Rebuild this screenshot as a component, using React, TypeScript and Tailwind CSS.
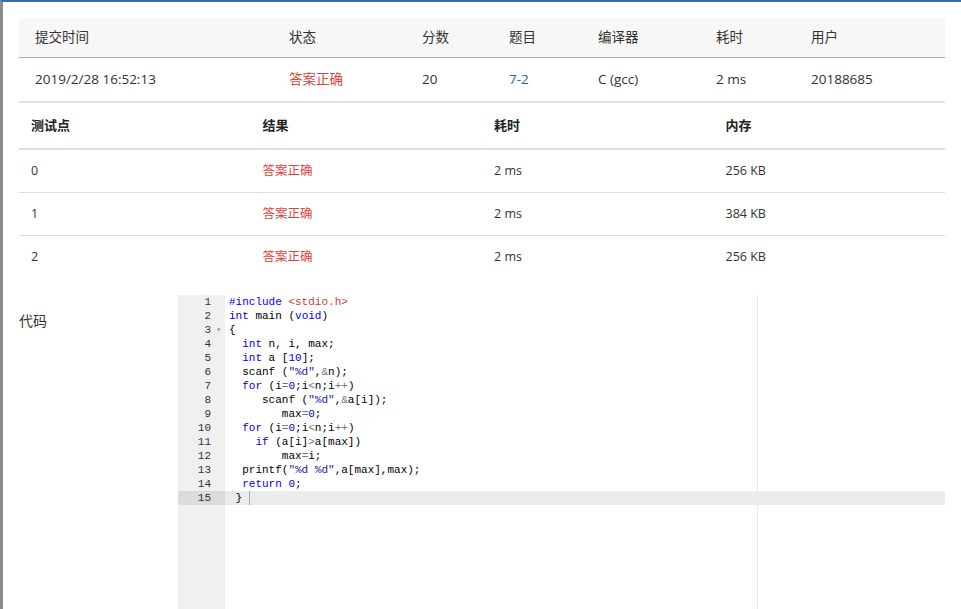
import React from "react";

const sans = { fontFamily: '"Open Sans", "Noto Sans CJK SC", sans-serif' };
const mono = { fontFamily: '"Liberation Mono", "DejaVu Sans Mono", monospace' };

type Seg = [string, string?];

const K = "text-[#0000ff]";
const S = "text-[#1a1aa6]";
const N = "text-[#0000cd]";
const O = "text-[#687687]";
const I = "text-[#c4403a]";

const code: Seg[][] = [
  [["#include", K], [" "], ["<stdio.h>", I]],
  [["int", K], [" main ("], ["void", K], [")"]],
  [["{"]],
  [["  "], ["int", K], [" n, i, max;"]],
  [["  "], ["int", K], [" a ["], ["10", N], ["];"]],
  [["  scanf ("], ['"%d"', S], [","], ["&", O], ["n);"]],
  [["  "], ["for", K], [" (i"], ["=", O], ["0", N], [";i"], ["<", O], ["n;i"], ["++", O], [")"]],
  [["     scanf ("], ['"%d"', S], [","], ["&", O], ["a[i]);"]],
  [["        max"], ["=", O], ["0", N], [";"]],
  [["  "], ["for", K], [" (i"], ["=", O], ["0", N], [";i"], ["<", O], ["n;i"], ["++", O], [")"]],
  [["    "], ["if", K], [" (a[i]"], [">", O], ["a[max])"]],
  [["        max"], ["=", O], ["i;"]],
  [["  printf("], ['"%d %d"', S], [",a[max],max);"]],
  [["  "], ["return", K], [" "], ["0", N], [";"]],
  [[" } "]],
];

const subCols = "grid grid-cols-[254px_133px_87px_89px_118px_95px_150px]";
const testCols = "grid grid-cols-4";

const tests = [
  { id: "0", mem: "256 KB" },
  { id: "1", mem: "384 KB" },
  { id: "2", mem: "256 KB" },
];

export default function App() {
  return (
    <div
      className="min-h-[609px] bg-white border-t-2 border-l-[3px] border-t-[#3d68b8] border-l-[#8c8c8c] pl-4 pr-4 pt-4 text-[#333]"
      style={sans}
    >
      <div className="w-[926px]">
        <div className={`${subCols} h-[40px] items-center bg-[#f7f7f7] border-b border-[#aaaaaa] text-[13.5px]`}>
          {["提交时间", "状态", "分数", "题目", "编译器", "耗时", "用户"].map((h) => (
            <div key={h} className="pl-4">{h}</div>
          ))}
        </div>
        <div className={`${subCols} h-[45px] items-center border-b-2 border-[#e4e4e4] text-[13.5px]`}>
          <div className="pl-4">2019/2/28 16:52:13</div>
          <div className="pl-4 text-[#e0443a]">答案正确</div>
          <div className="pl-4">20</div>
          <div className="pl-4 text-[#2d5aa0]">7-2</div>
          <div className="pl-4">C (gcc)</div>
          <div className="pl-4">2 ms</div>
          <div className="pl-4">20188685</div>
        </div>

        <div className={`${testCols} h-[47px] items-center border-b-2 border-[#dddddd] text-[13px] font-semibold text-[#222]`}>
          {["测试点", "结果", "耗时", "内存"].map((h) => (
            <div key={h} className="pl-3">{h}</div>
          ))}
        </div>
        {tests.map((t, i) => (
          <div
            key={t.id}
            className={`${testCols} h-[43px] items-center text-[12.5px] ${i < 2 ? "border-b border-[#dddddd]" : ""}`}
          >
            <div className="pl-3">{t.id}</div>
            <div className="pl-3 text-[#e0443a]">答案正确</div>
            <div className="pl-3">2 ms</div>
            <div className="pl-3">{t.mem}</div>
          </div>
        ))}

        <div className="flex mt-4">
          <div className="w-[159px] pt-[16px] text-sm">代码</div>
          <div className="relative flex flex-1 h-[320px] bg-white overflow-hidden" style={mono}>
            <div className="w-[47px] bg-[#f0f0f0] text-[11px] leading-[14px] text-[#333]">
              {code.map((_, i) => (
                <div
                  key={i}
                  className={`flex justify-end pr-[14px] relative ${i === 14 ? "bg-[#dcdcdc]" : ""}`}
                >
                  {i + 1}
                  {i === 2 && (
                    <span className="absolute right-[4px] top-0 text-[8px] text-[#888]">▾</span>
                  )}
                </div>
              ))}
            </div>
            <div className="flex-1 text-[11px] leading-[14px] text-black">
              {code.map((line, i) => (
                <div
                  key={i}
                  className={`pl-[4px] whitespace-pre h-[14px] flex items-center ${i === 14 ? "bg-[#ececec]" : ""}`}
                >
                  {line.map(([t, c], j) => (
                    <span key={j} className={c}>{t}</span>
                  ))}
                  {i === 14 && <span className="inline-block w-px h-[14px] bg-[#aaa]" />}
                </div>
              ))}
            </div>
            <div className="absolute top-0 bottom-0 left-[579px] w-px bg-[#e8e8e8]" />
          </div>
        </div>
      </div>
    </div>
  );
}
